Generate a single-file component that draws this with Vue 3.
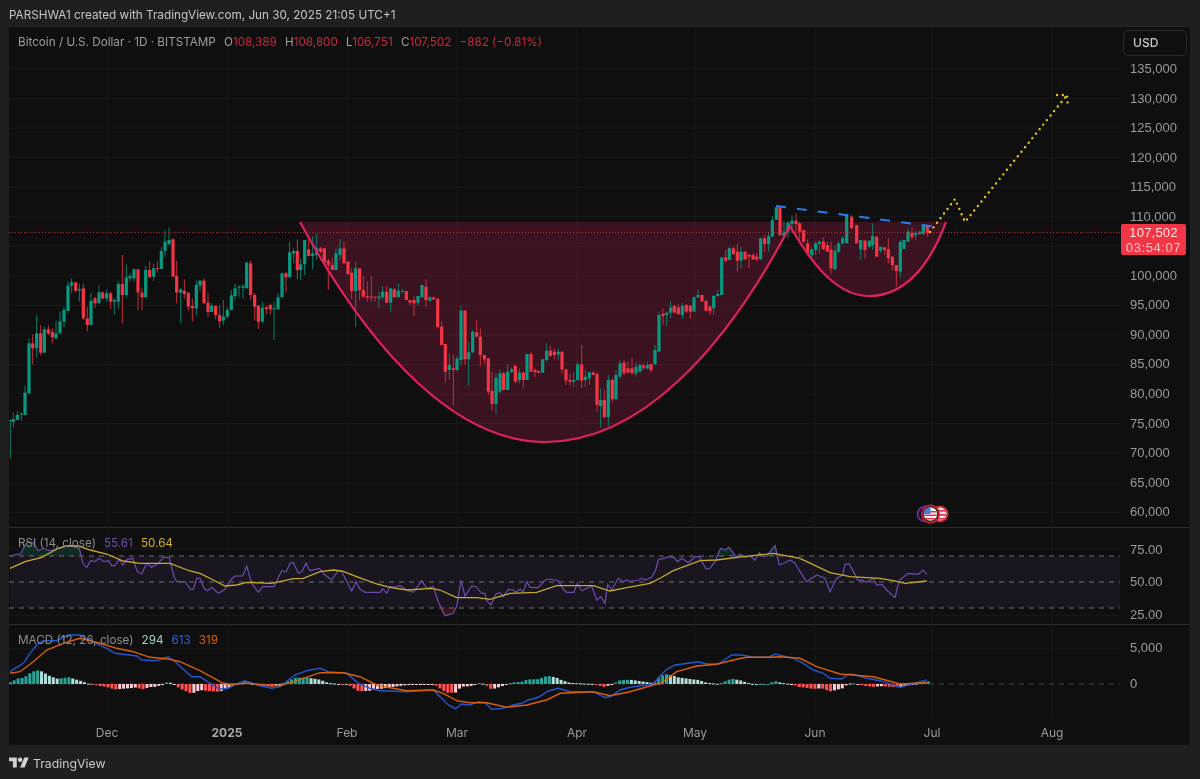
<script setup>
const candleSegs = [
  { x0: 0, y0: 220, d: 'g31,600,603,600,715 g40,597,605,578,622 g52,585,600,573,600 g64,581,584,578,603 g75,518,585,498,585 g87,370,520,355,520 r98,370,385,343,433 g110,340,385,285,412 r122,340,398,316,405 g133,328,398,320,398 r145,328,340,316,345 r157,336,352,325,370 g168,340,355,302,358 g180,305,340,275,340 g192,270,305,262,322 g204,197,273,185,273 g215,187,197,175,220 r227,187,212,187,218 g238,208,212,190,245 r250,205,295,190,300 r262,295,315,260,333 g273,242,315,218,315 r285,235,250,230,264 g297,217,250,195,250 r308,217,235,215,240 g320,220,235,208,245 r332,220,245,215,268 g343,240,245,235,283 g355,192,245,183,265 r367,192,225,105,310 g379,172,225,133,232 g390,168,175,160,185 g402,148,175,145,185 r414,148,217,148,272 r426,218,232,202,270 g437,150,232,138,232 r449,150,172,125,172 g461,145,170,130,183 r472,144,147,123,158 g484,93,147,82,147 g495,65,93,30,110 g507,60,73,22,75 r519,58,170,55,170 r530,168,218,122,250 g542,208,218,205,310 r553,212,222,178,235 r565,218,260,218,272 r577,258,265,235,305 g589,195,265,182,285 g600,182,197,180,212 r612,182,250,175,250 r624,248,276,218,290 g635,257,276,250,276 r647,258,285,255,298 r659,285,303,255,323 g670,290,302,240,315 g682,270,290,262,295 g694,226,270,210,270 g705,205,228,190,240 g717,200,203,195,230 g729,198,203,192,235 g740,128,205,125,205 r752,130,225,122,240 r764,225,260,220,302 r775,257,305,255,327 g787,263,305,245,308 r799,262,267,258,282 r811,255,268,250,283 g822,265,268,245,360 g834,232,268,220,268 g846,160,232,158,232 r858,160,172,155,218 g869,97,172,65,172 g881,93,100,85,130 r892,93,150,58,178' },
  { x0: 300, y0: 220, d: 'g2,133,150,115,180 g14,60,133,60,165 r26,88,108,60,110 g38,100,108,50,148 g50,85,105,42,120 r62,85,95,80,100 r73,85,128,85,130 r85,122,135,115,210 r97,135,150,115,150 g108,100,150,85,150 g120,85,105,57,120 r132,85,130,65,130 r144,125,162,125,165 r155,158,213,145,238 g167,145,213,125,320 r179,145,210,145,240 r190,210,230,168,235 r202,228,232,185,245 r214,230,232,168,245 r225,230,232,230,245 g237,230,235,215,265 g248,215,232,198,240 r260,215,248,198,250 g272,205,248,205,275 r283,208,232,205,232 g295,212,232,190,232 g307,212,215,208,222 r319,213,240,213,240 r330,240,248,240,255 r342,240,250,230,288 g354,228,248,228,258 g366,195,232,195,232 r378,200,240,178,262 g390,232,242,228,245 r401,232,238,232,240 r413,236,322,236,322 r425,320,375,305,375 r436,372,455,372,487 g448,435,450,403,478 r460,445,450,405,556 g471,415,450,408,455 g483,272,420,257,435 r495,272,418,270,435 g506,397,418,365,498 g518,335,397,330,400 r530,337,350,300,352 r541,350,405,325,440 r553,405,418,405,432 r565,415,515,415,525 r576,513,552,455,572 g588,473,552,460,583 g600,460,515,448,520 r611,460,510,455,510 g623,455,510,433,510 g635,448,456,443,460 r646,437,485,437,490 g658,458,480,445,490 r670,458,480,455,505 g681,402,480,402,480 r693,402,455,395,455 r705,450,456,445,470 r716,453,458,452,460 g728,418,458,418,458 g740,392,420,370,425 r751,392,408,377,410 r763,395,405,385,418 g775,395,403,385,420 r786,395,448,395,460 r798,448,482,448,495 r810,480,485,462,495 g821,480,485,457,500 g833,433,480,425,482 r845,433,482,375,505 g856,470,480,450,500 g868,457,475,455,495 r880,458,465,453,465 r891,463,555,458,575' },
  { x0: 580, y0: 200, d: 'g62,600,618,565,683 r73,600,652,570,650 g85,540,652,525,680 r97,540,598,535,608 g108,525,598,510,598 g120,490,530,480,535 r132,488,520,480,525 r144,505,518,483,520 r156,505,520,472,525 g168,500,520,488,530 g180,495,515,490,518 r190,497,503,490,510 g202,495,505,485,508 r213,492,510,492,518 g225,450,493,435,495 g237,345,455,335,455 r249,342,348,325,375 g260,338,345,335,378 g272,322,338,305,355 r283,318,338,315,340 r295,322,342,312,345 g307,318,345,308,357 r319,315,335,312,340 r331,318,335,315,355 g342,292,335,290,335 g354,285,292,268,295 r366,285,305,285,305 r378,303,332,298,335 r390,320,333,315,345 g401,288,325,285,345 g413,282,288,270,290 g425,172,285,172,285 r437,172,182,150,188 g448,145,180,142,180 r460,145,162,140,165 r472,155,182,130,215 g483,155,182,140,205 r495,155,178,155,180 r507,165,170,160,205 r519,165,178,160,180 r530,170,178,158,182 g542,115,178,112,180 r554,115,132,105,155 g566,108,132,98,155 g577,60,110,48,110 g589,22,60,18,60 r600,22,105,22,108 g612,95,108,62,118 g624,68,95,62,115 g636,62,72,45,100 r648,62,72,40,100 r659,70,95,65,120 r671,90,125,90,130 r683,130,160,118,165 g695,148,165,145,175 g707,130,150,125,165 g718,125,132,122,160 r730,125,148,112,150 r742,135,155,125,155 r753,148,205,125,222 g765,152,208,135,210 g776,130,155,125,160 g788,115,130,108,135' },
  { x0: 740, y0: 190, d: 'g320,75,160,75,160 r335,80,115,75,118 r350,105,160,105,160 g362,150,178,150,210 r375,152,180,150,205 g388,152,170,150,175 g398,138,165,100,180 r410,140,200,140,200 g422,170,182,170,190 r434,172,180,172,195 r445,178,205,145,220 r457,200,225,200,240 r469,225,243,225,290 g481,155,245,150,262 g492,150,177,150,177 g504,125,155,115,155 r516,128,142,112,148 g527,128,135,122,150 g539,125,132,122,135 g550,105,132,105,135 r562,105,130,105,140' }
]

const candles = candleSegs.flatMap(seg =>
  seg.d.split(' ').map(s => {
    const up = s[0] === 'g'
    const [x, top, bot, hi, lo] = s.slice(1).split(',').map(Number)
    return {
      up,
      x: seg.x0 + x / 3,
      top: seg.y0 + top / 3,
      h: Math.max((bot - top) / 3, 1),
      hi: seg.y0 + hi / 3,
      lo: seg.y0 + lo / 3
    }
  })
)

// each indicator line is traced per crop as zoomed pairs, then merged into real coords
const crops = [[0, 530], [200, 530], [390, 530], [660, 530]]
function merge(parts) {
  const out = []
  parts.forEach((str, i) => {
    const limit = i < 3 ? crops[i + 1][0] : 9999
    const nums = str.split(' ').map(p => p.split(',').map(Number))
    nums.forEach(([z, v]) => {
      const x = crops[i][0] + z / 3
      if (x < limit) out.push([x, crops[i][1] + v / 3])
    })
  })
  return out
}
const rsi = merge([
  '30,78 50,72 62,72 75,45 85,35 100,38 115,62 130,55 150,62 175,55 195,48 220,50 238,55 248,100 260,112 272,92 285,95 297,85 312,95 325,92 335,107 345,107 358,88 368,105 382,88 398,85 412,125 425,132 440,100 455,112 475,100 490,82 508,82 522,140 530,155 555,155 572,178 580,178 590,145',
  '0,145 12,175 22,182 35,172 55,190 75,178 92,150 105,138 128,138 140,108 155,160 175,187 188,170 222,170 245,122 258,126 270,100 280,98 295,130 305,125 318,100 330,122 358,115 375,135 395,150 415,122 425,125 455,183 468,155 480,178 495,187 540,187 548,176 560,190 570,168',
  '0,170 15,172 30,167 50,180 70,187 95,152 110,175 130,170 145,215 165,257 190,250 200,228 213,152 225,198 245,168 258,170 275,190 285,190 290,212 303,225 318,192 330,188 340,200 355,178 370,180 378,187 390,178 400,185 410,155 420,172 445,173 465,150 480,147 505,152 520,178 530,187 552,187 562,160 575,182 605,168 620,210 632,200 645,220 653,163 665,180 685,145 700,155 710,150 720,155 745,150 755,145 765,150 785,142 797,120 805,90',
  '0,88 30,80 45,85 52,95 65,85 85,98 105,80 118,80 138,117 150,115 165,95 182,55 195,60 207,52 228,80 242,73 255,82 270,78 285,90 298,68 310,80 320,78 345,47 358,105 375,98 390,90 405,100 420,125 440,155 470,135 495,145 510,185 530,145 548,135 555,103 568,102 595,152 605,150 620,157 640,145 650,165 665,163 680,180 705,203 718,150 745,130 775,133 790,120 800,133'
])
const rsiMa = merge([
  '30,115 75,95 125,82 175,55 205,47 235,48 270,60 320,72 370,93 420,100 510,100 570,123',
  '0,130 40,150 75,168 110,165 140,157 215,160 280,146 310,145 360,125 400,120 425,123 470,140 530,162 570,174',
  '0,172 50,180 125,175 150,180 200,203 260,203 300,208 360,190 440,187 500,167 610,167 660,183 710,173 780,160',
  '0,145 40,122 120,92 170,90 250,80 340,70 420,85 510,128 570,140 660,145 700,152 735,160 800,153'
])
const macd = merge([
  '30,425 50,412 70,400 90,370 110,345 130,332 170,332 205,315 240,315 265,330 320,355 345,370 410,378 425,390 470,392 505,380 525,395 575,440',
  '0,440 30,460 60,478 85,475 110,462 135,452 170,465 215,475 240,470 265,450 285,435 320,422 360,415 385,425 440,430 475,460 510,475 540,482',
  '0,483 50,485 85,483 130,480 150,500 175,525 197,536 215,522 240,525 265,515 285,518 305,538 340,535 370,525 395,520 415,510 445,502 475,483 505,475 540,485 610,485 645,503 665,498 690,480 720,472 790,462',
  '0,438 20,418 45,405 95,398 115,395 140,402 175,402 215,375 245,375 280,382 325,382 345,372 400,385 430,400 460,420 490,430 510,445 545,447 565,433 580,433 620,445 660,452 720,472 800,450'
])
const signal = merge([
  '30,430 60,425 100,395 140,360 190,340 240,325 300,340 350,355 400,365 450,382 505,387 540,395',
  '0,422 70,460 90,463 150,460 190,465 240,467 290,452 360,428 430,428 480,440 530,465',
  '0,473 50,482 130,480 160,490 200,512 240,518 290,518 350,532 410,525 470,510 510,490 610,485 660,497 720,485 800,462',
  '0,462 50,425 110,408 170,403 220,390 260,382 330,382 360,380 420,385 470,410 540,432 640,440 720,462 800,458'
])

const pts = line => line.map(p => p.map(n => n.toFixed(1)).join(',')).join(' ')
const rsiPts = pts(rsi)
const rsiMaPts = pts(rsiMa)
const macdPts = pts(macd)
const signalPts = pts(signal)
const area = (limit, fn) =>
  pts([[rsi[0][0], limit], ...rsi.map(([x, y]) => [x, fn(y, limit)]), [rsi[rsi.length - 1][0], limit]])
const overPts = area(556, Math.min)
const underPts = area(608, Math.max)

function at(line, x) {
  for (let i = 1; i < line.length; i++) {
    if (x <= line[i][0]) {
      const [x0, y0] = line[i - 1]
      const [x1, y1] = line[i]
      return y0 + ((y1 - y0) * (x - x0)) / (x1 - x0)
    }
  }
  return line[line.length - 1][1]
}
const ZERO = 684
let prev = 0
const bars = []
for (let i = 0; i < 236; i++) {
  const x = 10.3 + 3.906 * i
  const v = at(signal, x) - at(macd, x)
  const pos = v >= 0
  const grow = Math.abs(v) >= Math.abs(prev)
  const fill = pos ? (grow ? '#26a69a' : '#b2dfdb') : grow ? '#ff5252' : '#ffcdd2'
  bars.push({ x: x - 1.5, y: pos ? ZERO - v : ZERO, h: Math.max(Math.abs(v), 1), fill })
  prev = v
}

const months = [
  { x: 107, t: 'Dec' }, { x: 227, t: '2025', bold: true }, { x: 347, t: 'Feb' },
  { x: 457, t: 'Mar' }, { x: 577, t: 'Apr' }, { x: 695, t: 'May' },
  { x: 815, t: 'Jun' }, { x: 932, t: 'Jul' }, { x: 1052, t: 'Aug' }
]
const priceTicks = ['135,000','130,000','125,000','120,000','115,000','110,000','','100,000','95,000','90,000','85,000','80,000','75,000','70,000','65,000','60,000']
const gridY = priceTicks.map((_, i) => 69 + i * 29.55)
</script>

<template>
  <div class="page">
    <div class="caption">PARSHWA1 created with TradingView.com, Jun 30, 2025 21:05 UTC+1</div>

    <div class="frame">
      <section class="pane pane-main">
        <div class="plot">
          <svg class="chart" width="1111" height="501" viewBox="9 26 1111 501">
            <line v-for="y in gridY" :key="y" class="grid" x1="9" x2="1120" :y1="y" :y2="y" />
            <line v-for="m in months" :key="m.x" class="grid" :x1="m.x" :x2="m.x" y1="26" y2="527" />

            <path class="cup-fill" d="M300 222 C375 360 460 442 545 442 C640 442 725 350 790 226 C815 270 840 296 869 296 C905 296 930 265 946 222 Z" />

            <g v-for="(c, i) in candles" :key="i" :class="c.up ? 'up' : 'down'">
              <line class="wick" :x1="c.x" :x2="c.x" :y1="c.hi" :y2="c.lo" />
              <rect class="body" :x="c.x - 1.6" :y="c.top" width="3.2" :height="c.h" />
            </g>

            <line class="last-price" x1="9" x2="1120" y1="232.5" y2="232.5" />
            <path class="cup-line" d="M300 222 C375 360 460 442 545 442 C640 442 725 350 790 226 C815 270 840 296 869 296 C905 296 930 265 946 222" />
            <line class="trend" x1="776" y1="206" x2="938" y2="227" />
            <polyline class="dots" points="930,232 955,199 965,222 1067,95" />
            <polyline class="dots" points="1057,95 1067,95 1068,108" />

            <g class="event">
              <circle class="ring-purple" cx="925" cy="514" r="7.5" />
              <circle class="flag-back" cx="940" cy="514" r="7.5" />
              <rect class="stripe" x="938" y="510" width="8" height="1.6" />
              <rect class="stripe" x="938" y="514" width="8" height="1.6" />
              <rect class="stripe" x="938" y="518" width="7" height="1.6" />
              <circle class="flag-ring" cx="930.5" cy="514" r="8.6" />
              <circle class="flag-face" cx="930.5" cy="514" r="6.8" />
              <path class="flag-red" d="M925 511h11v1.4h-11zM924.2 514.6h12.6v1.4h-12.6zM925.4 518h10v1.4h-10z" />
              <path class="flag-blue" d="M930.5 507.2v6.8h-6.8a6.8 6.8 0 0 1 6.8-6.8z" />
            </g>
          </svg>

          <div class="legend legend-main">
            <span class="title">Bitcoin / U.S. Dollar · 1D · BITSTAMP</span>
            <span class="ohlc">O<em>108,389</em></span>
            <span class="ohlc">H<em>108,800</em></span>
            <span class="ohlc">L<em>106,751</em></span>
            <span class="ohlc">C<em>107,502</em></span>
            <em class="change">−882 (−0.81%)</em>
          </div>
        </div>

        <div class="axis axis-main">
          <div class="currency">USD</div>
          <div class="ticks">
            <span v-for="(t, i) in priceTicks" :key="i" class="tick">{{ t }}</span>
          </div>
          <div class="price-tag">
            <span>107,502</span>
            <span class="countdown">03:54:07</span>
          </div>
        </div>
      </section>

      <section class="pane pane-rsi">
        <div class="plot">
          <svg class="chart" width="1111" height="97" viewBox="9 527 1111 97">
            <line class="grid" x1="9" x2="1120" y1="549" y2="549" />
            <line class="grid" x1="9" x2="1120" y1="615" y2="615" />
            <rect class="band" x="10" y="556" width="1110" height="52" />
            <line v-for="m in months" :key="m.x" class="grid" :x1="m.x" :x2="m.x" y1="527" y2="624" />
            <line v-for="y in [556, 582, 608]" :key="y" class="level" x1="9" x2="1120" :y1="y" :y2="y" />
            <polygon class="over" :points="overPts" />
            <polygon class="under" :points="underPts" />
            <polyline class="rsi" :points="rsiPts" />
            <polyline class="rsi-ma" :points="rsiMaPts" />
          </svg>
          <div class="legend legend-sub">
            <span>RSI (14, close)</span>
            <span class="purple">55.61</span>
            <span class="yellow">50.64</span>
          </div>
        </div>
        <div class="axis axis-rsi">
          <span class="tick">75.00</span>
          <span class="tick">50.00</span>
          <span class="tick">25.00</span>
        </div>
      </section>

      <section class="pane pane-macd">
        <div class="plot">
          <svg class="chart" width="1111" height="93" viewBox="9 624 1111 93">
            <line class="grid" x1="9" x2="1120" y1="649" y2="649" />
            <line v-for="m in months" :key="m.x" class="grid" :x1="m.x" :x2="m.x" y1="624" y2="717" />
            <line class="level zero" x1="9" x2="1120" y1="684" y2="684" />
            <rect v-for="(b, i) in bars" :key="i" :x="b.x" :y="b.y" width="3" :height="b.h" :fill="b.fill" />
            <polyline class="macd" :points="macdPts" />
            <polyline class="signal" :points="signalPts" />
          </svg>
          <div class="legend legend-sub">
            <span>MACD (12, 26, close)</span>
            <span class="mint">294</span>
            <span class="blue">613</span>
            <span class="orange">319</span>
          </div>
        </div>
        <div class="axis axis-macd">
          <span class="tick">5,000</span>
          <span class="tick">0</span>
        </div>
      </section>

      <svg class="time-axis" width="1181" height="28" viewBox="9 717 1181 28">
        <text v-for="m in months" :key="m.x" :x="m.x" y="736.5" text-anchor="middle" :class="{ bold: m.bold }">{{ m.t }}</text>
      </svg>
    </div>

    <footer class="brand">
      <svg class="logo" width="20" height="16" viewBox="0 0 36 28">
        <path d="M14 22H7V11H0V4h14v18zM28 22h-8l7.5-18h8L28 22z" />
        <circle cx="20" cy="8" r="4" />
      </svg>
      <span>TradingView</span>
    </footer>
  </div>
</template>

<style>
html, body { margin: 0; background: #1f1f1f; }
</style>

<style scoped>
.page {
  width: 1200px;
  height: 779px;
  display: flex;
  flex-direction: column;
  background: #1f1f1f;
  font-family: Inter, "Liberation Sans", sans-serif;
  overflow: hidden;
  filter: blur(0.45px);
}
.caption {
  height: 26px;
  padding-left: 9px;
  font-size: 11.73px;
  line-height: 31px;
  color: #c4c4c4;
  white-space: nowrap;
}
.frame {
  width: 1181px;
  margin-left: 9px;
  display: flex;
  flex-direction: column;
  background: #0f0f0f;
  box-shadow: inset 0 1px 0 #262626;
}
.pane { display: flex; }
.pane-rsi, .pane-macd { box-shadow: inset 0 1px 0 #2b2b2b; }
.pane-main { height: 501px; }
.pane-rsi { height: 97px; }
.pane-macd { height: 93px; }
.plot { position: relative; width: 1111px; }
.chart { display: block; }
.grid { stroke: #1b1b1b; stroke-width: 1; }
.cup-fill { fill: rgba(233, 30, 99, 0.2); }
.wick { stroke-width: 1; }
.up .wick { stroke: #0a7d6a; }
.down .wick { stroke: #c22f3d; }
.up .body { fill: #089981; }
.down .body { fill: #f23645; }
.last-price { stroke: #b32e38; stroke-width: 1; stroke-dasharray: 1 2; }
.cup-line { fill: none; stroke: #e0215f; stroke-width: 2.2; }
.trend { stroke: #2b7cf0; stroke-width: 2; stroke-dasharray: 10 11; }
.dots {
  fill: none;
  stroke: #ecca18;
  stroke-width: 2.4;
  stroke-linecap: round;
  stroke-dasharray: 0 5.8;
}
.ring-purple { fill: #1a0f22; stroke: #7b2fa6; stroke-width: 1.6; }
.flag-back { fill: #f0e4e4; stroke: #c9243c; stroke-width: 2; }
.stripe { fill: #d8344a; }
.flag-ring { fill: #0f0f0f; stroke: #c9243c; stroke-width: 1.8; }
.flag-face { fill: #f4f0f0; }
.flag-red { fill: #e2384d; }
.flag-blue { fill: #3f7fe0; }

.legend {
  position: absolute;
  left: 9px;
  top: 9px;
  display: flex;
  white-space: nowrap;
  font-size: 11.7px;
}
.legend em { font-style: normal; color: #c92a3a; }
.legend-main { gap: 8.2px; color: #9d9d9d; }
.legend-sub { gap: 8px; color: #8d8d8d; }
.purple { color: #6f4fb0; }
.yellow { color: #d3b02c; }
.mint { color: #9fd4c9; }
.blue { color: #2d62d8; }
.orange { color: #d9610d; }

.band { fill: #19161f; }
.level { stroke: #6e6e6e; stroke-width: 1; stroke-dasharray: 5 5; }
.level.zero { stroke: #444; }
.over { fill: rgba(8, 153, 129, 0.2); }
.under { fill: rgba(242, 54, 69, 0.15); }
.rsi { fill: none; stroke: #6d4bb0; stroke-width: 1.2; }
.rsi-ma { fill: none; stroke: #c9a92c; stroke-width: 1.3; }
.macd { fill: none; stroke: #2257d2; stroke-width: 1.4; }
.signal { fill: none; stroke: #d95f0c; stroke-width: 1.4; }

.axis {
  position: relative;
  width: 70px;
  display: flex;
  flex-direction: column;
  font-family: "Liberation Sans", Arial, sans-serif;
  padding-left: 10px;
  box-sizing: border-box;
}
.tick {
  display: block;
  font-size: 13px;
  line-height: 16px;
  color: #9a9a9a;
}
.axis-main .ticks {
  display: grid;
  grid-auto-rows: 29.55px;
  align-items: center;
  margin-top: -1.8px;
}
.currency {
  width: 64px;
  height: 26px;
  margin: 4px 0 0 -7px;
  box-sizing: border-box;
  padding-left: 9px;
  border: 1px solid #2a2a2a;
  border-radius: 5px;
  font: 500 12px/24px Inter, sans-serif;
  color: #c8c8c8;
}
.price-tag {
  position: absolute;
  top: 198px;
  left: 1px;
  width: 65px;
  height: 31px;
  display: flex;
  flex-direction: column;
  align-items: center;
  justify-content: center;
  border-radius: 2px;
  background: #f23645;
  color: #fde6e6;
  font-size: 13px;
  line-height: 15px;
  letter-spacing: 0.2px;
}
.countdown { color: #fcc7cb; letter-spacing: 0.6px; }
.axis-rsi { padding-top: 14.5px; gap: 16.5px; }
.axis-macd { padding-top: 16px; gap: 20px; }

.time-axis { display: block; }
.time-axis text {
  font-size: 12px;
  fill: #999;
  font-family: Inter, sans-serif;
}
.time-axis text.bold { font-weight: 700; fill: #a8a8a8; }

.brand {
  display: flex;
  align-items: center;
  gap: 4px;
  height: 34px;
  padding: 2px 0 0 9px;
  box-sizing: border-box;
  color: #c8c8c8;
  font-size: 12.3px;
}
.logo { fill: #d2d2d2; }
</style>
